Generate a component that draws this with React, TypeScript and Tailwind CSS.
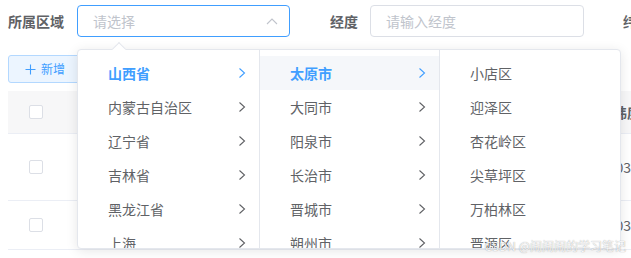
import React from "react";

const provinces = ["山西省", "内蒙古自治区", "辽宁省", "吉林省", "黑龙江省", "上海"];
const cities = ["太原市", "大同市", "阳泉市", "长治市", "晋城市", "朔州市"];
const districts = ["小店区", "迎泽区", "杏花岭区", "尖草坪区", "万柏林区", "晋源区"];

function Arrow({ active }: { active?: boolean }) {
  return (
    <svg width="8" height="12" viewBox="0 0 8 12" className="shrink-0">
      <path
        d="M1.5 1.5 L6.5 6 L1.5 10.5"
        fill="none"
        stroke={active ? "#409eff" : "#606266"}
        strokeWidth="1.1"
      />
    </svg>
  );
}

function Column({
  items,
  activeIndex,
  hoverIndex,
  hasArrow,
  width,
  border,
}: {
  items: string[];
  activeIndex?: number;
  hoverIndex?: number;
  hasArrow: boolean;
  width: string;
  border: boolean;
}) {
  return (
    <div className={`${width} ${border ? "border-r border-[#e4e7ed]" : ""} shrink-0 py-[6px] overflow-hidden`}>
      {items.map((name, i) => {
        const active = i === activeIndex;
        return (
          <div
            key={name}
            className={`flex h-[34px] items-center justify-between pl-[30px] pr-[13px] ${
              i === hoverIndex ? "bg-[#f5f7fa]" : ""
            }`}
          >
            <span className={active ? "font-bold text-[#409eff]" : "text-[#606266]"}>{name}</span>
            {hasArrow && <Arrow active={active} />}
          </div>
        );
      })}
    </div>
  );
}

function Checkbox() {
  return <div className="h-[14px] w-[14px] rounded-[2px] border border-[#dcdfe6] bg-white" />;
}

export default function App() {
  return (
    <div className="relative h-[258px] w-[631px] overflow-hidden bg-white font-['Noto_Sans_CJK_SC',sans-serif] text-[14px]">
      {/* search form */}
      <div className="mt-[5px] flex h-[32px] items-center whitespace-nowrap pl-[8px]">
        <span className="w-[69px] shrink-0 font-bold text-[#606266]">所属区域</span>
        <div className="flex h-[32px] w-[213px] shrink-0 items-center justify-between rounded-[4px] border border-[#409eff] pl-[15px] pr-[11px]">
          <span className="text-[#c0c4cc]">请选择</span>
          <svg width="12" height="7" viewBox="0 0 12 7">
            <path d="M1 6 L6 1 L11 6" fill="none" stroke="#c0c4cc" strokeWidth="1.1" />
          </svg>
        </div>
        <span className="ml-[40px] w-[40px] shrink-0 font-bold text-[#606266]">经度</span>
        <div className="flex h-[32px] w-[214px] shrink-0 items-center rounded-[4px] border border-[#dcdfe6] pl-[15px]">
          <span className="text-[#c0c4cc]">请输入经度</span>
        </div>
        <span className="ml-[39px] shrink-0 font-bold text-[#606266]">纬度</span>
      </div>

      {/* toolbar */}
      <div className="mt-[18px] pl-[8px]">
        <button className="flex h-[28px] items-center gap-[5px] rounded-[3px] border border-[#b3d8ff] bg-[#ecf5ff] px-[16px] text-[12px] text-[#409eff]">
          <svg width="11" height="11" viewBox="0 0 11 11">
            <path d="M5.5 0.5 V10.5 M0.5 5.5 H10.5" stroke="#409eff" strokeWidth="1.1" />
          </svg>
          新增
        </button>
      </div>

      {/* table */}
      <div className="ml-[8px] mt-[8px] text-[#606266]">
        <div className="flex h-[43px] items-center border-b border-[#ebeef5] bg-[#f7f7f8]">
          <div className="w-[591px] shrink-0 pl-[21px]">
            <Checkbox />
          </div>
          <span className="ml-[14px] shrink-0 whitespace-nowrap font-bold text-[#606266]">纬度</span>
        </div>
        <div className="flex h-[67px] items-center border-b border-[#ebeef5]">
          <div className="w-[557px] shrink-0 pl-[21px]">
            <Checkbox />
          </div>
          <span className="shrink-0 whitespace-nowrap">112.54903</span>
        </div>
        <div className="flex h-[49px] items-center border-b border-[#ebeef5]">
          <div className="w-[557px] shrink-0 pl-[21px]">
            <Checkbox />
          </div>
          <span className="shrink-0 whitespace-nowrap">112.54303</span>
        </div>
      </div>

      {/* cascader dropdown */}
      <div className="absolute left-[77px] top-[49px] h-[200px] w-[544px] rounded-[4px] border border-[#e4e7ed] bg-white shadow-[0_2px_12px_0_rgba(0,0,0,0.1)]">
        <div className="absolute left-[36px] top-[-6px] h-[10px] w-[10px] rotate-45 border-l border-t border-[#e4e7ed] bg-white" />
        <div className="relative flex h-full overflow-hidden rounded-[4px]">
          <Column items={provinces} activeIndex={0} hasArrow width="w-[182px]" border />
          <Column items={cities} activeIndex={0} hoverIndex={0} hasArrow width="w-[180px]" border />
          <Column items={districts} hasArrow={false} width="flex-1" border={false} />
        </div>
      </div>

      {/* watermark */}
      <div className="absolute right-[5px] top-[237px] whitespace-nowrap text-[12px] text-white/90 [text-shadow:0_0_1px_rgba(0,0,0,0.45)]">
        CSDN @闹闹闹的学习笔记
      </div>
    </div>
  );
}
